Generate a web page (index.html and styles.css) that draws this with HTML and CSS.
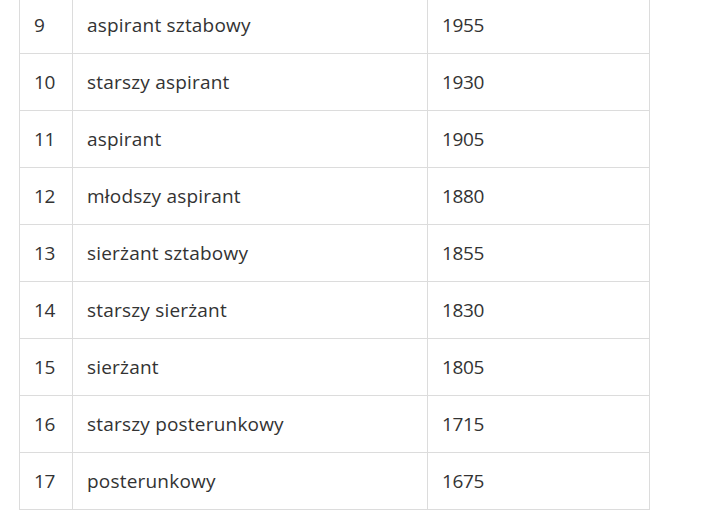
FILE: index.html
```html
<!DOCTYPE html>
<html lang="pl">
<head>
<meta charset="utf-8">
<link rel="stylesheet" href="styles.css">
</head>
<body>
<table class="ranks">
<colgroup><col class="c-num"><col class="c-name"><col class="c-val"></colgroup>
<tbody>
<tr><td class="num">9</td><td>aspirant sztabowy</td><td class="num">1955</td></tr>
<tr><td class="num">10</td><td>starszy aspirant</td><td class="num">1930</td></tr>
<tr><td class="num">11</td><td>aspirant</td><td class="num">1905</td></tr>
<tr><td class="num">12</td><td>młodszy aspirant</td><td class="num">1880</td></tr>
<tr><td class="num">13</td><td>sierżant sztabowy</td><td class="num">1855</td></tr>
<tr><td class="num">14</td><td>starszy sierżant</td><td class="num">1830</td></tr>
<tr><td class="num">15</td><td>sierżant</td><td class="num">1805</td></tr>
<tr><td class="num">16</td><td>starszy posterunkowy</td><td class="num">1715</td></tr>
<tr><td class="num">17</td><td>posterunkowy</td><td class="num">1675</td></tr>
</tbody>
</table>
</body>
</html>
```

FILE: styles.css
```css
html, body {
  margin: 0;
  padding: 0;
  background: #fff;
}
body {
  font-family: "Open Sans", "Noto Sans", sans-serif;
  color: #333;
  overflow: hidden;
}
.ranks {
  border-collapse: collapse;
  margin: -4px 0 0 19px;
  width: 630px;
  table-layout: fixed;
  font-size: 19px;
}
.c-num { width: 53px; }
.c-name { width: 355px; }
.c-val { width: 222px; }
.ranks td {
  border: 1px solid #dcdcdc;
  height: 57px;
  padding: 0 14px;
  box-sizing: border-box;
  vertical-align: middle;
  line-height: 24px;
  letter-spacing: 0.2px;
}
.ranks td.num {
  letter-spacing: -0.4px;
}
```
